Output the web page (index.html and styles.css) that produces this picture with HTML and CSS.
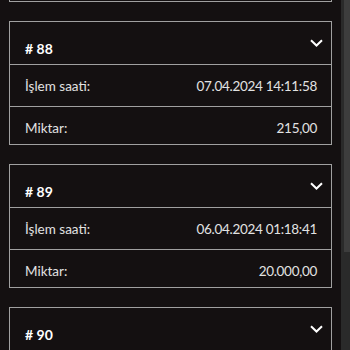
FILE: index.html
```html
<!DOCTYPE html>
<html lang="tr">

<head>
    <meta charset="UTF-8">
    <meta name="viewport" content="width=device-width, initial-scale=1.0">
    <title>İşlemler</title>
    <link rel="stylesheet" href="styles.css">
</head>

<body>

    <div class="page">
        <main class="list">

            <!-- tail of the previous card -->
            <div class="card-end"></div>

            <section class="card">
                <div class="card-head">
                    <span class="card-title"># 88</span>
                    <svg class="chevron" width="13" height="8" viewBox="0 0 13 8"><path d="M1 1.2l5.5 5.3 5.5-5.3" /></svg>
                </div>
                <div class="row">
                    <span>İşlem saati:</span>
                    <span class="value">07.04.2024 14:11:58</span>
                </div>
                <div class="row row-last">
                    <span>Miktar:</span>
                    <span class="value">215,00</span>
                </div>
            </section>

            <section class="card">
                <div class="card-head">
                    <span class="card-title"># 89</span>
                    <svg class="chevron" width="13" height="8" viewBox="0 0 13 8"><path d="M1 1.2l5.5 5.3 5.5-5.3" /></svg>
                </div>
                <div class="row">
                    <span>İşlem saati:</span>
                    <span class="value">06.04.2024 01:18:41</span>
                </div>
                <div class="row row-last">
                    <span>Miktar:</span>
                    <span class="value">20.000,00</span>
                </div>
            </section>

            <section class="card">
                <div class="card-head">
                    <span class="card-title"># 90</span>
                    <svg class="chevron" width="13" height="8" viewBox="0 0 13 8"><path d="M1 1.2l5.5 5.3 5.5-5.3" /></svg>
                </div>
                <div class="row"></div>
            </section>

        </main>

        <!-- scrollbar -->
        <div class="scrollbar">
            <div class="scrollbar-thumb"></div>
        </div>
    </div>

</body>

</html>
```

FILE: styles.css
```css
body {
    margin: 0;
    font-family: 'Lato', sans-serif;
    font-size: 13.5px;
    background-color: #141011;
    color: #e2e2e2;
}

.page {
    display: flex;
    height: 350px;
    overflow: hidden;
}

.list {
    flex: 1;
    padding: 0 9px;
}

.card-end {
    height: 1px;
    border: 1px solid #a0a0a0;
    border-top: none;
    margin-bottom: 19px;
}

.card {
    border: 1px solid #a0a0a0;
    margin-bottom: 19px;
}

.card-head {
    height: 42px;
    display: flex;
    align-items: center;
    justify-content: space-between;
    padding: 0 8px 0 15px;
}

.card-title {
    padding-top: 10px;
    font-weight: 700;
    font-size: 14px;
    color: #fff;
}

.chevron {
    fill: none;
    stroke: #fff;
    stroke-width: 2;
}

.row {
    height: 41px;
    display: flex;
    align-items: center;
    justify-content: space-between;
    padding: 0 14px 0 15px;
    border-top: 1px solid #a0a0a0;
}

.value {
    letter-spacing: -0.3px;
}

.row-last {
    box-sizing: border-box;
    height: 38px;
    padding-top: 4px;
}

/* Scrollbar */
.scrollbar {
    width: 9px;
    background-color: #2a2a2a;
    display: flex;
    justify-content: flex-end;
}

.scrollbar-thumb {
    width: 6px;
    height: 252px;
    background-color: #3d3d3d;
}
```
